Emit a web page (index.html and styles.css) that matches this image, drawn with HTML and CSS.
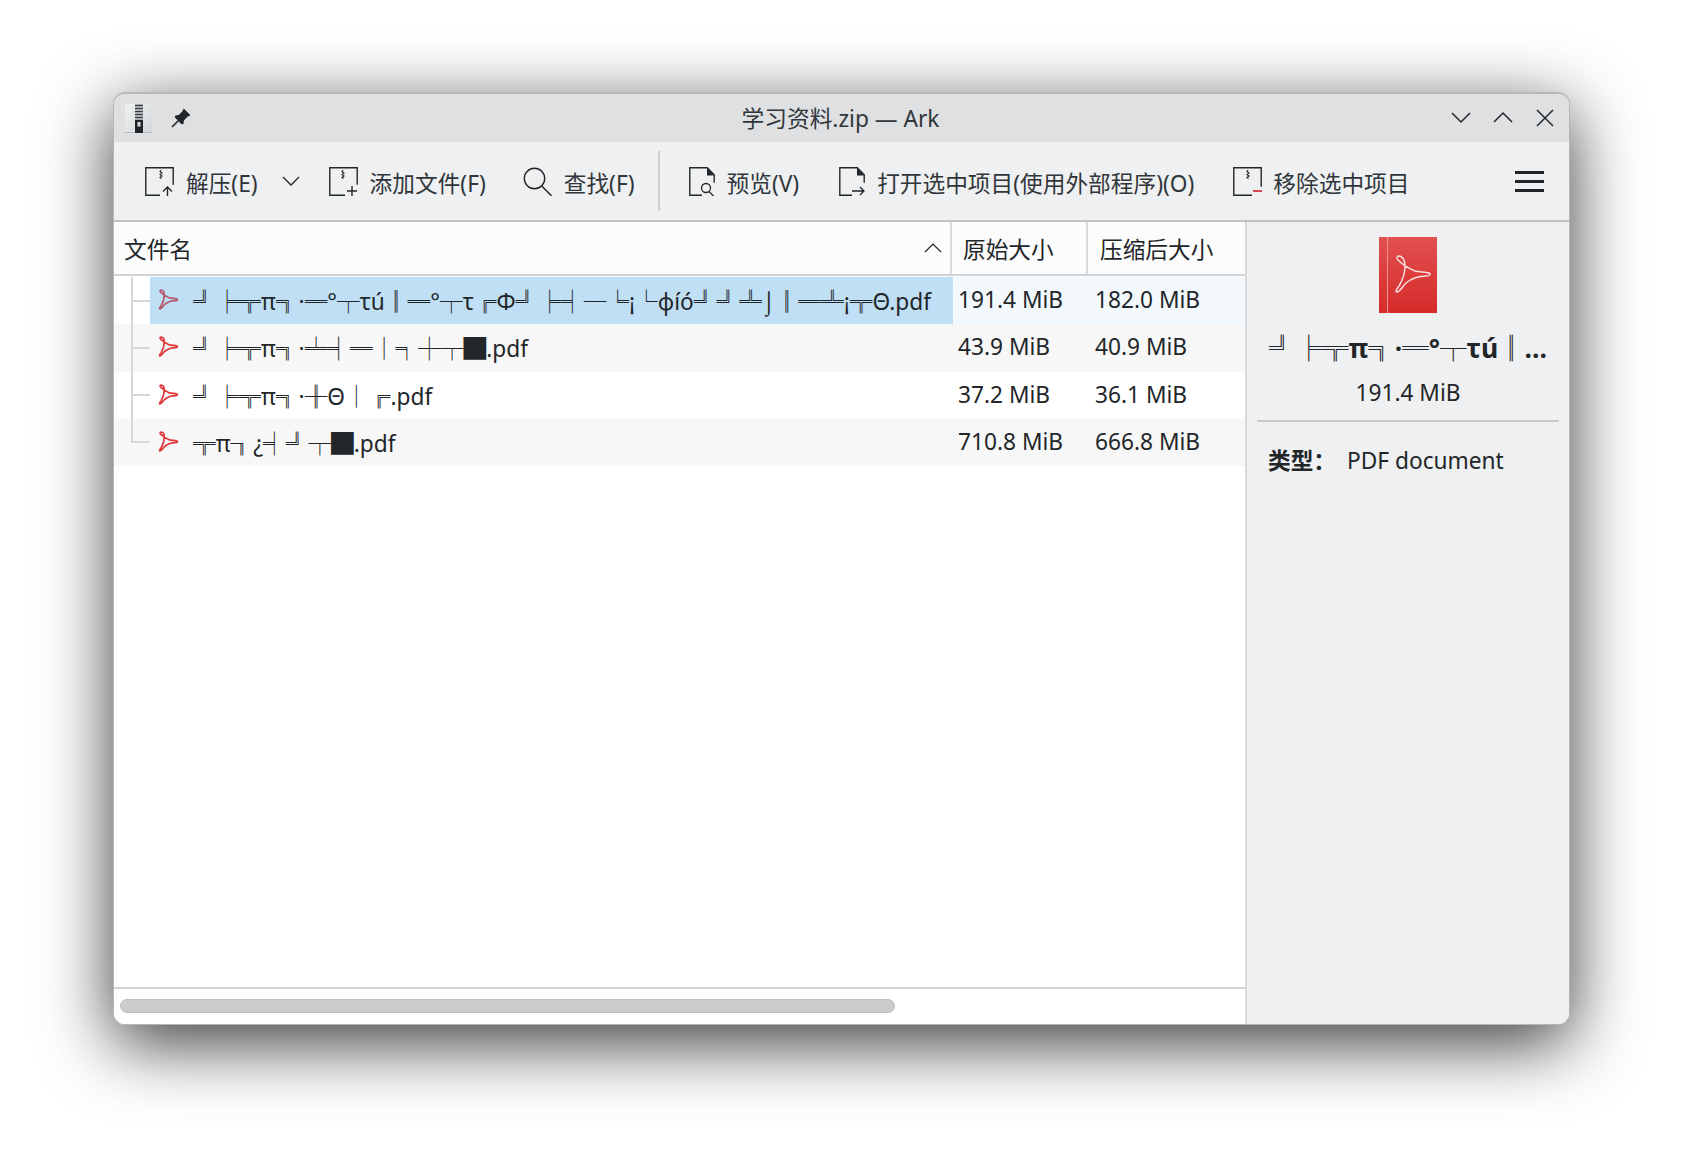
FILE: index.html
```html
<!DOCTYPE html>
<html lang="zh">
<head>
<meta charset="utf-8">
<title>学习资料.zip — Ark</title>
<link rel="stylesheet" href="styles.css">
</head>
<body>
<svg class="defs" width="0" height="0" aria-hidden="true">
  <symbol id="adobe" viewBox="0 0 40 40">
    <path d="M6 2C10 2 12 7 12 12 12 19 9 27 6 32 3 36 2 38 4 38 7 38 9 33 13 29 18 25 25 22 33 22 37 22 38 20 36 19 33 18 27 18 22 17 15 14 9 10 5 6 3 4 4 2 6 2Z"/>
  </symbol>
</svg>
<div class="desk">
  <main class="window">
    <header class="titlebar">
      <div class="title-left">
        <svg class="app-icon" viewBox="0 0 27 29">
          <defs>
            <linearGradient id="zipbox" x1="0" y1="0" x2="1" y2="1">
              <stop offset="0" stop-color="#eef0f1"/>
              <stop offset="1" stop-color="#d5d8da"/>
            </linearGradient>
          </defs>
          <rect width="27" height="29" fill="url(#zipbox)"/>
          <rect y="28" width="27" height="1" fill="#b9bec2"/>
          <path d="M10 0h8v16h-8z" fill="#a9adb0"/>
          <path d="M10 1.500h8M10 4.500h8M10 7.500h8M10 10.500h8M10 13.500h8" stroke="#3a3d40" stroke-width="1"/>
          <path d="M10 16h8v13h-8z" fill="#232629"/>
          <rect x="12.500" y="18" width="3" height="4.500" fill="#d7dadc"/>
        </svg>
        <svg class="pin-icon" viewBox="0 0 20 20">
          <path d="M1 19l6.500-6.500" stroke="#232629" stroke-width="1.600" fill="none"/>
          <path d="M12.700 0.500l6.800 6.800-3 1.500-3.600 3.700-.4 3.500-2 .3L3.700 9.200l.7-1.800 3.400-.3 3.500-3.700z" fill="#232629"/>
        </svg>
      </div>
      <h1 class="title">学习资料.zip — Ark</h1>
      <div class="win-buttons">
        <svg class="win-btn" viewBox="0 0 20 20"><path d="M1 5l9 9 9-9" fill="none" stroke="#232629" stroke-width="1.500"/></svg>
        <svg class="win-btn" viewBox="0 0 20 20"><path d="M1 14l9-9 9 9" fill="none" stroke="#232629" stroke-width="1.500"/></svg>
        <svg class="win-btn" viewBox="0 0 20 20"><path d="M2 2l16 16M18 2L2 18" fill="none" stroke="#232629" stroke-width="1.500"/></svg>
      </div>
    </header>

    <nav class="toolbar">
      <div class="tool">
        <svg class="tool-icon" viewBox="0 0 29 29">
          <path d="M15 .8H.8v27.400H15M15 .8h13.200v17" fill="none" stroke="#232629" stroke-width="1.400"/>
          <path d="M16 3l-1 1.500 2 1.500-2 1.500 2 1.500-2 1.500 1.500 1" fill="none" stroke="#232629" stroke-width="1.100"/>
          <path d="M22.500 29V20M18 24.500l4.500-4.500 4.500 4.500" fill="none" stroke="#232629" stroke-width="1.400"/>
        </svg>
        <span>解压(E)</span>
      </div>
      <svg class="chevron" viewBox="0 0 18 10"><path d="M1 1l8 8 8-8" fill="none" stroke="#232629" stroke-width="1.300"/></svg>
      <div class="tool tool-after-chevron">
        <svg class="tool-icon" viewBox="0 0 29 29">
          <path d="M15 .8H.8v27.400H16M15 .8h13.200v17" fill="none" stroke="#232629" stroke-width="1.400"/>
          <path d="M14 3l-1 1.500 2 1.500-2 1.500 2 1.500-2 1.500 1.500 1" fill="none" stroke="#232629" stroke-width="1.100"/>
          <path d="M23 19v10M18 24h10" fill="none" stroke="#232629" stroke-width="1.400"/>
        </svg>
        <span>添加文件(F)</span>
      </div>
      <div class="tool tool-wide">
        <svg class="tool-icon" viewBox="0 0 29 29">
          <circle cx="11.500" cy="11.500" r="10.200" fill="none" stroke="#232629" stroke-width="1.400"/>
          <path d="M18.500 18.800L28.500 28.800" fill="none" stroke="#232629" stroke-width="1.500"/>
        </svg>
        <span>查找(F)</span>
      </div>
      <div class="tool-sep"></div>
      <div class="tool tool-preview">
        <svg class="tool-icon doc-icon" viewBox="0 0 26 29">
          <path d="M13 28.200H.8V.8h17.500l6.900 7v8" fill="none" stroke="#232629" stroke-width="1.400"/>
          <path d="M18 1v7.500h7z" fill="#232629"/>
          <circle cx="17" cy="21" r="4.500" fill="none" stroke="#232629" stroke-width="1.300"/>
          <path d="M20 24.500l4.500 4.500" stroke="#232629" stroke-width="1.300"/>
        </svg>
        <span>预览(V)</span>
      </div>
      <div class="tool tool-open">
        <svg class="tool-icon doc-icon" viewBox="0 0 26 29">
          <path d="M13 28.200H.8V.8h17.500l6.900 7v8" fill="none" stroke="#232629" stroke-width="1.400"/>
          <path d="M18 1v7.500h7z" fill="#232629"/>
          <path d="M13 24h12M21 20l4 4-4 4" fill="none" stroke="#232629" stroke-width="1.300"/>
        </svg>
        <span>打开选中项目(使用外部程序)(O)</span>
      </div>
      <div class="tool tool-remove">
        <svg class="tool-icon" viewBox="0 0 29 29">
          <path d="M15 .8H.8v27.400H19M15 .8h13.200v19" fill="none" stroke="#232629" stroke-width="1.400"/>
          <path d="M15 3l-1 1.500 2 1.500-2 1.500 2 1.500-2 1.500 1.500 1" fill="none" stroke="#232629" stroke-width="1.100"/>
          <path d="M20 24h9" fill="none" stroke="#da4453" stroke-width="1.800"/>
        </svg>
        <span>移除选中项目</span>
      </div>
      <div class="menu-btn"><i></i><i></i><i></i></div>
    </nav>

    <div class="content">
      <section class="files">
        <div class="table-head">
          <div class="th th-name">
            <span>文件名</span>
            <svg class="sort" viewBox="0 0 18 10"><path d="M1 9l8-8 8 8" fill="none" stroke="#232629" stroke-width="1.200"/></svg>
          </div>
          <div class="th th-size">原始大小</div>
          <div class="th th-comp">压缩后大小</div>
        </div>
        <div class="rows">
          <div class="row row-current">
            <div class="gutter"></div>
            <div class="cell-name selected"><svg class="row-icon"><use href="#adobe"/></svg><span>╝╞╦π╗·═°┬τú║═°┬τ╔Φ╝╞╡─╘¡└φíó╝╝╩⌡║═╩¡╦Θ.pdf</span></div>
            <div class="cell-size">191.4 MiB</div>
            <div class="cell-comp">182.0 MiB</div>
          </div>
          <div class="row row-alt">
            <div class="gutter"></div>
            <div class="cell-name"><svg class="row-icon"><use href="#adobe"/></svg><span>╝╞╦π╗·╧╡═│╕┼┬█.pdf</span></div>
            <div class="cell-size">43.9 MiB</div>
            <div class="cell-comp">40.9 MiB</div>
          </div>
          <div class="row">
            <div class="gutter"></div>
            <div class="cell-name"><svg class="row-icon"><use href="#adobe"/></svg><span>╝╞╦π╗·╫Θ│╔.pdf</span></div>
            <div class="cell-size">37.2 MiB</div>
            <div class="cell-comp">36.1 MiB</div>
          </div>
          <div class="row row-alt">
            <div class="gutter gutter-last"></div>
            <div class="cell-name"><svg class="row-icon"><use href="#adobe"/></svg><span>╦π╖¿╡╝┬█.pdf</span></div>
            <div class="cell-size">710.8 MiB</div>
            <div class="cell-comp">666.8 MiB</div>
          </div>
        </div>
        <div class="hscroll"><div class="hscroll-thumb"></div></div>
      </section>

      <aside class="info">
        <svg class="big-pdf" viewBox="0 0 58 76">
          <defs>
            <linearGradient id="cover" x1="0" y1="0" x2="0" y2="1">
              <stop offset="0" stop-color="#e2504f"/>
              <stop offset="1" stop-color="#d62a2a"/>
            </linearGradient>
          </defs>
          <rect width="58" height="76" fill="url(#cover)"/>
          <rect x="8" width="1" height="76" fill="#ee9492"/>
          <svg x="14" y="17" width="40" height="40" viewBox="0 0 40 40" class="big-glyph"><use href="#adobe"/></svg>
        </svg>
        <div class="info-name">╝╞╦π╗·═°┬τú║...</div>
        <div class="info-size">191.4 MiB</div>
        <div class="info-rule"></div>
        <div class="info-meta"><b>类型：</b><span>PDF document</span></div>
      </aside>
    </div>
  </main>
</div>
</body>
</html>
```

FILE: styles.css
```css
* { box-sizing: border-box; }
html, body { margin: 0; padding: 0; background: #fff; }
body {
  font-family: "Noto Sans", "Noto Sans CJK SC", sans-serif;
  font-size: 22.7px;
  color: #232629;
  overflow: hidden;
}
.defs { display: block; height: 0; }
.desk { height: 1159px; padding: 92px 112px 134px 113px; }
.window {
  height: 933px;
  display: flex;
  flex-direction: column;
  background: #eff0f1;
  border-radius: 12px;
  overflow: hidden;
  border: 1px solid #b4b6b8;
  border-top: 2px solid #b6b8ba;
  box-shadow: 0 18px 70px rgba(0, 0, 0, .78);
}
.titlebar {
  height: 48px;
  flex: none;
  display: flex;
  align-items: center;
  justify-content: space-between;
  background: #dee0e2;
  padding: 0 14px 0 11px;
  position: relative;
}
.title-left { display: flex; align-items: center; gap: 19px; }
.app-icon { width: 27px; height: 29px; }
.pin-icon { width: 20px; height: 20px; }
.title {
  margin: -2px 0 0;
  padding-right: 2px;
  font-size: 22.7px;
  font-weight: 400;
  color: #31363b;
  position: absolute;
  left: 0;
  right: 0;
  text-align: center;
  pointer-events: none;
}
.win-buttons { display: flex; gap: 22px; }
.win-btn { width: 20px; height: 20px; }

.toolbar {
  height: 80px;
  flex: none;
  display: flex;
  align-items: center;
  padding: 0 25px 0 31px;
  border-bottom: 2px solid #bfc1c3;
  background: #eff0f1;
}
.tool { display: flex; align-items: center; gap: 12px; white-space: nowrap; color: #31363b; }
.tool span { padding-top: 2px; }
.tool-icon { width: 29px; height: 29px; flex: none; }
.doc-icon { width: 26px; }
.chevron { width: 18px; height: 10px; margin-left: 24px; }
.tool-after-chevron { margin-left: 29px; }
.tool-wide { margin-left: 37px; }
.tool-sep { width: 2px; height: 60px; background: #cdcfd1; margin-left: 23px; }
.tool-preview { margin-left: 29px; }
.tool-open { margin-left: 40px; }
.tool-remove { margin-left: 39px; gap: 11px; }
.menu-btn {
  margin-left: auto;
  width: 29px;
  display: flex;
  flex-direction: column;
  gap: 6px;
}
.menu-btn i { display: block; height: 3px; background: #232629; }

.content { flex: 1; display: flex; min-height: 0; }
.files {
  width: 1133px;
  flex: none;
  display: flex;
  flex-direction: column;
  background: #fff;
  border-right: 2px solid #d8d9da;
}
.table-head {
  height: 54px;
  flex: none;
  display: flex;
  background: #fcfcfc;
  border-bottom: 2px solid #d1d2d3;
}
.th { display: flex; align-items: center; }
.th-name { width: 838px; padding-left: 10px; padding-right: 8px; justify-content: space-between; border-right: 2px solid #d8d9da; }
.th-size { width: 136px; padding-left: 11px; border-right: 2px solid #d8d9da; }
.th-comp { padding-left: 12px; }
.sort { width: 18px; height: 10px; }
.rows { flex: 1; padding-top: 1px; }
.row { height: 47.25px; display: flex; align-items: stretch; }
.row-alt { background: #f7f7f7; }
.row-current { background: #f3f8fd; }
.gutter {
  width: 36px;
  flex: none;
  background:
    linear-gradient(#d6d7d8, #d6d7d8) 17px 0 / 2px 100% no-repeat,
    linear-gradient(#d6d7d8, #d6d7d8) 17px 50% / 19px 2px no-repeat;
}
.row-current .gutter { background-color: #fff; }
.gutter-last {
  background:
    linear-gradient(#d6d7d8, #d6d7d8) 17px 0 / 2px 52% no-repeat,
    linear-gradient(#d6d7d8, #d6d7d8) 17px 50% / 19px 2px no-repeat;
}
.cell-name {
  width: 803px;
  flex: none;
  display: flex;
  align-items: center;
  gap: 14px;
  padding: 0 0 2px 8px;
  white-space: nowrap;
  overflow: hidden;
}
.cell-name span { padding-top: 2px; }
.selected { background: #bfdff5; }
.row-icon {
  width: 21px;
  height: 21px;
  flex: none;
  color: #e0393a;
  fill: none;
  stroke: currentColor;
  stroke-width: 3.200;
  stroke-linejoin: round;
}
.selected .row-icon { color: #b5566f; }
.big-glyph {
  color: #f9dede;
  fill: none;
  stroke: currentColor;
  stroke-width: 1.500;
  stroke-linejoin: round;
}
.cell-size { width: 137px; flex: none; padding: 0 0 2px 5px; display: flex; align-items: center; }
.cell-comp { padding: 0 0 2px 5px; display: flex; align-items: center; }
.hscroll {
  height: 37px;
  flex: none;
  border-top: 2px solid #d1d2d3;
  padding: 10px 0 0 6px;
  background: #fff;
}
.hscroll-thumb {
  width: 775px;
  height: 14px;
  border-radius: 7px;
  background: #cbcdcc;
  border: 1px solid #bdbfbe;
}

.info {
  flex: 1;
  display: flex;
  flex-direction: column;
  align-items: center;
  background: #eff0f1;
  padding: 15px 10px 0;
}
.big-pdf { width: 58px; height: 76px; flex: none; }
.info-name { font-size: 26.500px; font-weight: 700; margin-top: 17px; white-space: nowrap; line-height: 36px; }
.info-size { margin-top: 12px; line-height: 30px; }
.info-rule { align-self: stretch; height: 2px; background: #c9cacb; margin-top: 12px; }
.info-meta { align-self: stretch; display: flex; padding-left: 11px; margin-top: 22px; line-height: 34px; }
.info-meta b { width: 79px; }
```
